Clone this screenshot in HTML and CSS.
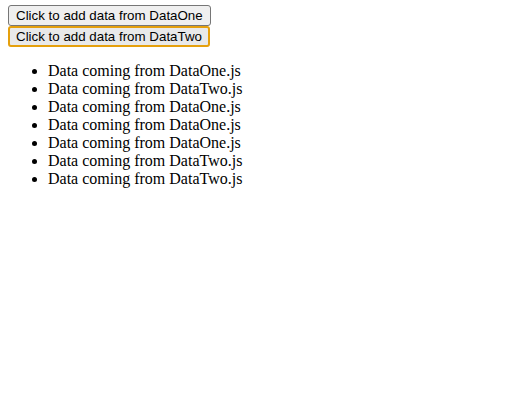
FILE: index.html
```html
<!DOCTYPE html>
<html>
<head>
<meta charset="utf-8">
<link rel="stylesheet" href="styles.css">
</head>
<body>
<div class="app">
  <div class="controls">
    <button class="btn">Click to add data from DataOne</button>
    <button class="btn btn-focused">Click to add data from DataTwo</button>
  </div>
  <ul class="list">
    <li>Data coming from DataOne.js</li>
    <li>Data coming from DataTwo.js</li>
    <li>Data coming from DataOne.js</li>
    <li>Data coming from DataOne.js</li>
    <li>Data coming from DataOne.js</li>
    <li>Data coming from DataTwo.js</li>
    <li>Data coming from DataTwo.js</li>
  </ul>
</div>
</body>
</html>
```
FILE: styles.css
```css
html, body {
  margin: 0;
  padding: 0;
  background: #ffffff;
}
.app {
  padding: 5px 8px;
  font-family: "Liberation Serif", serif;
  font-size: 16px;
  color: #000;
}
.controls {
  display: flex;
  flex-direction: column;
  align-items: flex-start;
  gap: 0;
}
.btn {
  font-family: "Liberation Sans", Arial, sans-serif;
  font-size: 13.333px;
  color: #000;
  background: #efefef;
  border: 1px solid #767676;
  border-radius: 3px;
  padding: 1px 7px;
  height: 21px;
  line-height: 15px;
  margin: 0;
}
.btn-focused {
  border: 2px solid #e5a00d;
  background: #e9e9e9;
  padding: 0px 6px;
}
.list {
  margin: 15px 0;
  padding-left: 40px;
  line-height: 18px;
}
```
